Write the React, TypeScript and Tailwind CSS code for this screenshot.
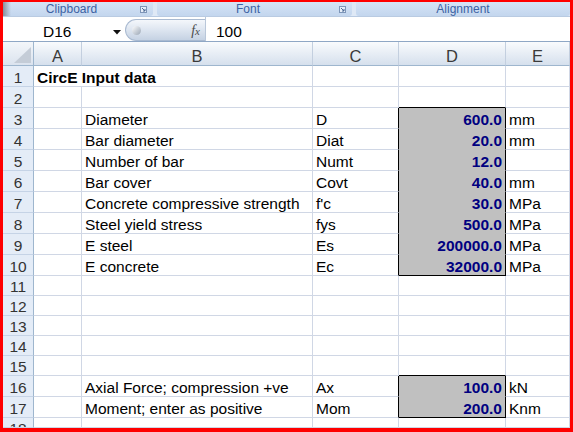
import type { ReactNode } from 'react'

type Row = {
  n: number
  h: string
  title?: string
  b?: string
  c?: string
  d?: string
  e?: string
  boxTop?: boolean // D cell sits right above a boxed block
}

const ROWS: Row[] = [
  { n: 1, h: 'h-[21px]', title: 'CircE Input data' },
  { n: 2, h: 'h-[21px]', boxTop: true },
  { n: 3, h: 'h-[21px]', b: 'Diameter', c: 'D', d: '600.0', e: 'mm' },
  { n: 4, h: 'h-[21px]', b: 'Bar diameter', c: 'Diat', d: '20.0', e: 'mm' },
  { n: 5, h: 'h-[21px]', b: 'Number of bar', c: 'Numt', d: '12.0', e: '' },
  { n: 6, h: 'h-[21px]', b: 'Bar cover', c: 'Covt', d: '40.0', e: 'mm' },
  { n: 7, h: 'h-[21px]', b: 'Concrete compressive strength', c: "f'c", d: '30.0', e: 'MPa' },
  { n: 8, h: 'h-[21px]', b: 'Steel yield stress', c: 'fys', d: '500.0', e: 'MPa' },
  { n: 9, h: 'h-[21px]', b: 'E steel', c: 'Es', d: '200000.0', e: 'MPa' },
  { n: 10, h: 'h-[21px]', b: 'E concrete', c: 'Ec', d: '32000.0', e: 'MPa' },
  { n: 11, h: 'h-[20px]' },
  { n: 12, h: 'h-[20px]' },
  { n: 13, h: 'h-[20px]' },
  { n: 14, h: 'h-[20px]' },
  { n: 15, h: 'h-[20px]', boxTop: true },
  { n: 16, h: 'h-[21px]', b: 'Axial Force; compression +ve', c: 'Ax', d: '100.0', e: 'kN' },
  { n: 17, h: 'h-[21px]', b: 'Moment; enter as positive', c: 'Mom', d: '200.0', e: 'Knm' },
  { n: 18, h: 'h-[10px]' },
]

const GRID = 'grid grid-cols-[31px_48px_231px_86px_107px_64px]'

function Cell({
  children,
  className = '',
  align = 'items-end',
  r = 'border-r-[#d0d7e5]',
  b = 'border-b-[#d0d7e5]',
}: {
  children?: ReactNode
  className?: string
  align?: string
  r?: string
  b?: string
}) {
  return (
    <div
      className={`flex ${align} overflow-hidden whitespace-nowrap border-r border-b px-[3px] leading-[17px] ${r} ${b} ${className}`}
    >
      {children}
    </div>
  )
}

function Launcher() {
  return (
    <svg width="7" height="7" viewBox="0 0 7 7" className="mr-[6px] shrink-0">
      <rect x="0.5" y="0.5" width="6" height="6" fill="#e6eef9" stroke="#7d95b8" />
      <path d="M2 2 L5 5 M5 3 V5 H3" stroke="#4d6a95" strokeWidth="1" fill="none" />
    </svg>
  )
}

function Group({ label, width, launcher = true }: { label: string; width: string; launcher?: boolean }) {
  return (
    <div
      className={`${width} flex items-center rounded-br-[3px] rounded-bl-[3px] bg-gradient-to-b from-[#d6e4f6] to-[#c3d6ee]`}
    >
      <span className="flex-1 text-center text-[12px] leading-[14px] text-[#3b62a3]">{label}</span>
      {launcher && <Launcher />}
    </div>
  )
}

export default function App() {
  return (
    <div className="w-[573px] h-[432px] overflow-hidden border-solid border-[#f00] border-t-2 border-l-[3px] border-r-[3px] border-b-4 bg-white flex flex-col font-['Liberation_Sans',Arial,sans-serif] text-black">
      {/* Ribbon group captions */}
      <div className="h-[14px] shrink-0 flex gap-[4px] bg-[#dfe9f6] relative">
        <div className="absolute left-0 top-0 h-full w-[8px] bg-gradient-to-r from-[#6b6f76] to-transparent opacity-70" />
        <Group label="Clipboard" width="w-[150px]" />
        <Group label="Font" width="w-[195px]" />
        <Group label="Alignment" width="flex-1" launcher={false} />
      </div>

      {/* Formula bar */}
      <div className="h-[26px] shrink-0 flex border-t border-b border-t-[#b9cbe2] border-b-[#8fa7c5] bg-white">
        <div className="w-[122px] flex items-end pb-[1px] pl-[40px] text-[15.5px] leading-[17px]">
          <span className="flex-1">D16</span>
          <svg width="8" height="5" viewBox="0 0 8 5" className="mb-[5px] mr-[4px]">
            <polygon points="0,0 8,0 4,4.5" fill="#111" />
          </svg>
        </div>
        <div className="w-[80px] mt-[2px] flex items-center rounded-l-full border border-r-0 border-[#a9bad1] bg-gradient-to-b from-[#f4f7fb] via-[#dde5f0] to-[#c5d2e3]">
          <div className="ml-[6px] h-[9px] w-[9px] rounded-full bg-gradient-to-br from-[#ffffff] to-[#9aa6b5]" />
          <span className="ml-auto mr-[5px] font-['Liberation_Serif',serif] italic text-[14px] text-[#4a4a4a]">
            f<span className="text-[11px]">x</span>
          </span>
        </div>
        <div className="flex-1 flex items-end pb-[1px] pl-[10px] border-l border-l-[#b9c7d9] text-[15.5px] leading-[17px]">
          100
        </div>
      </div>

      {/* Column headers */}
      <div className={`${GRID} h-[24px] shrink-0 text-[16.5px] text-[#3a3a3a]`}>
        <div className="relative border-r border-b border-r-[#9eb6ce] border-b-[#9eb6ce] bg-gradient-to-b from-[#f3f6fa] to-[#dbe3ee]">
          <svg width="17" height="16" viewBox="0 0 17 16" className="absolute right-[2px] bottom-[2px]">
            <polygon points="17,0 17,16 0,16" fill="#c4ccd7" />
          </svg>
        </div>
        {['A', 'B', 'C', 'D', 'E'].map((l) => (
          <div
            key={l}
            className="flex items-end justify-center leading-[18px] border-r border-b border-r-[#c3cfdf] border-b-[#9eb6ce] bg-gradient-to-b from-[#f9fbfd] to-[#d6e0ed]"
          >
            {l}
          </div>
        ))}
      </div>

      {/* Sheet rows */}
      {ROWS.map((row) => {
        const boxed = row.d !== undefined
        const last = row.n === 10 || row.n === 17
        const partial = row.n === 18
        return (
          <div key={row.n} className={`${GRID} ${row.h} shrink-0 text-[15.5px]`}>
            <Cell
              className={`justify-center bg-[#e4ecf7] text-[#333] ${partial ? 'pt-[2px]' : ''}`}
              align={partial ? 'items-start' : 'items-end'}
              r="border-r-[#9eb6ce]"
              b="border-b-[#c5d3e6]"
            >
              {row.n}
            </Cell>
            {row.title ? (
              <Cell className="col-span-2 font-bold">{row.title}</Cell>
            ) : (
              <>
                <Cell />
                <Cell>{row.b}</Cell>
              </>
            )}
            <Cell r={boxed ? 'border-r-black' : 'border-r-[#d0d7e5]'}>{row.c}</Cell>
            <Cell
              className={boxed ? 'justify-end bg-[#c0c0c0] font-bold text-[#000080]' : ''}
              r={boxed ? 'border-r-black' : 'border-r-[#d0d7e5]'}
              b={row.boxTop || last ? 'border-b-black' : boxed ? 'border-b-[#c0c0c0]' : 'border-b-[#d0d7e5]'}
            >
              {row.d}
            </Cell>
            <Cell>{row.e}</Cell>
          </div>
        )
      })}
    </div>
  )
}
